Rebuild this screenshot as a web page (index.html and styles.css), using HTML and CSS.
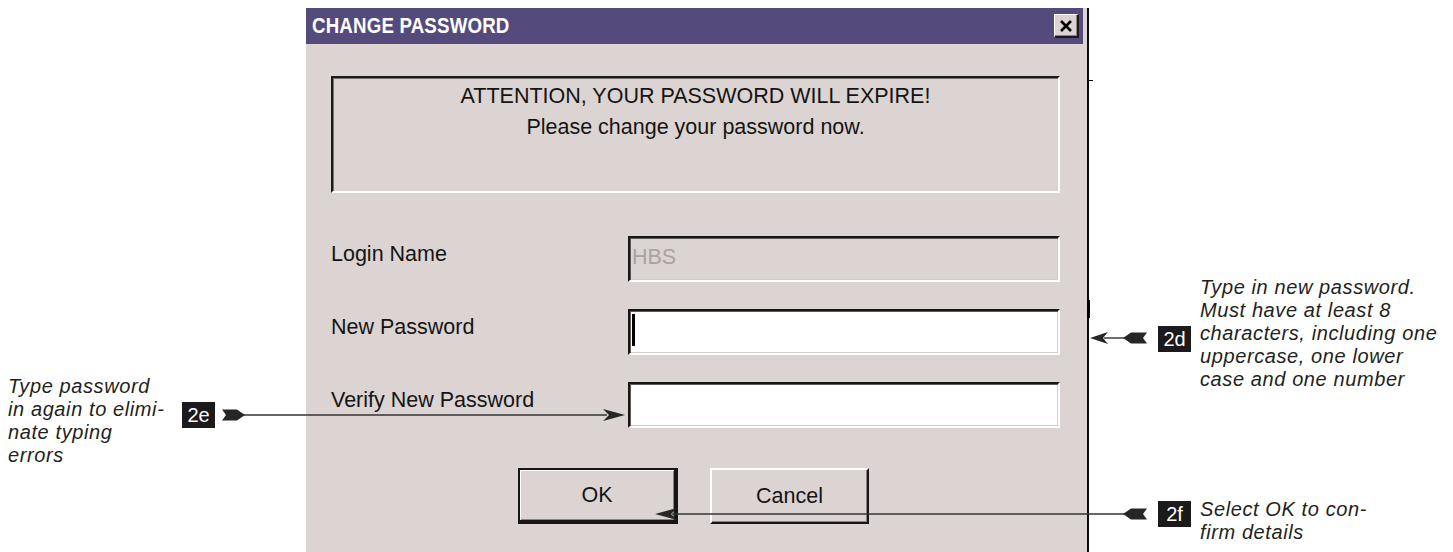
FILE: index.html
```html
<!DOCTYPE html>
<html lang="en">
<head>
<meta charset="utf-8">
<title>Change Password</title>
<link rel="stylesheet" href="styles.css">
</head>
<body>
<div class="page">
  <aside class="notes notes-left">
    <div class="note note-2e">
      <p class="note-text">Type password<br>in again to elimi-<br>nate typing<br>errors</p>
      <span class="badge">2e</span>
    </div>
  </aside>

  <section class="window">
    <header class="titlebar">
      <span class="title">CHANGE PASSWORD</span>
      <span class="close" aria-label="Close">
        <svg width="14" height="14" viewBox="0 0 14 14">
          <path d="M2 2 L12 12 M12 2 L2 12" stroke="#000" stroke-width="2.6" fill="none"/>
        </svg>
      </span>
    </header>

    <div class="body">
      <div class="message">
        <p>ATTENTION, YOUR PASSWORD WILL EXPIRE!</p>
        <p>Please change your password now.</p>
      </div>

      <div class="form">
        <div class="row">
          <span class="label">Login Name</span>
          <div class="field field-disabled">HBS</div>
        </div>
        <div class="row">
          <span class="label">New Password</span>
          <div class="field"><span class="caret"></span></div>
        </div>
        <div class="row">
          <span class="label">Verify New Password</span>
          <div class="field"></div>
        </div>
      </div>

      <div class="actions">
        <div class="btn btn-default">OK</div>
        <div class="btn">Cancel</div>
      </div>
    </div>
  </section>

  <aside class="notes notes-right">
    <div class="note note-2d">
      <span class="badge">2d</span>
      <p class="note-text">Type in new password.<br>Must have at least 8<br>characters, including one<br>uppercase, one lower<br>case and one number</p>
    </div>
    <div class="note note-2f">
      <span class="badge">2f</span>
      <p class="note-text">Select OK to con-<br>firm details</p>
    </div>
  </aside>

  <svg class="arrows" width="1453" height="552" viewBox="0 0 1453 552">
    <g stroke="#333" stroke-width="1.4" fill="none">
      <line x1="238" y1="415" x2="607" y2="415"/>
      <line x1="1104" y1="338" x2="1126" y2="338"/>
      <line x1="672" y1="514" x2="1126" y2="514"/>
    </g>
    <g fill="#262626" stroke="none">
      <!-- 2e: tail, then head pointing at the verify field -->
      <path d="M245 415 L237 409.5 L222 409.5 L226 415 L222 420.5 L237 420.5 Z"/>
      <path d="M625 415 L603 409 L609 415 L603 421 Z"/>
      <!-- 2d: head at the dialog edge, tail next to the badge -->
      <path d="M1090 338 L1108 332 L1103 338 L1108 344 Z"/>
      <path d="M1123 338 L1131 332.5 L1147 332.5 L1143 338 L1147 343.5 L1131 343.5 Z"/>
      <!-- 2f: tail next to the badge, head on the OK button -->
      <path d="M1123 514 L1131 508.5 L1147 508.5 L1143 514 L1147 519.5 L1131 519.5 Z"/>
      <path d="M655 514 L677 508 L671 514 L677 520 Z"/>
    </g>
  </svg>
</div>
</body>
</html>
```

FILE: styles.css
```css
html, body {
  margin: 0;
  padding: 0;
  overflow: hidden;
  background: #fff;
}

.page {
  position: relative;
  width: 1453px;
  height: 552px;
  display: grid;
  grid-template-columns: 306px 783px 1fr;
  align-items: start;
  overflow: hidden;
}

/* arrow layer drawn over the dialog and the notes */
.arrows {
  position: absolute;
  left: 0;
  top: 0;
  pointer-events: none;
}

/* ---------- callout notes ---------- */

.notes {
  font-family: "Liberation Sans", Arial, sans-serif;
  font-style: italic;
  font-size: 20px;
  letter-spacing: 0.6px;
  line-height: 23px;
  color: #231f20;
}

.note-text {
  margin: 0;
  white-space: nowrap;
}

.badge {
  display: block;
  width: 33px;
  height: 26px;
  line-height: 26px;
  text-align: center;
  background: #1c1a1a;
  color: #fff;
  font-style: normal;
  font-size: 20px;
  letter-spacing: 0;
}

.notes-left {
  padding-top: 375px;
  padding-left: 8px;
}

.note-2e {
  display: grid;
  grid-template-columns: 174px auto;
  align-items: start;
}

.note-2e .badge {
  margin-top: 27px;
}

.notes-right {
  display: flex;
  flex-direction: column;
  padding-left: 69px;
}

.note-2d,
.note-2f {
  display: flex;
  align-items: flex-start;
  gap: 9px;
}

.note-2d {
  margin-top: 276px;
}

.note-2d .badge {
  margin-top: 50px;
}

.note-2f {
  margin-top: 107px;
}

.note-2f .badge {
  margin-top: 3px;
}

/* ---------- dialog window ---------- */

.window {
  position: relative;
  margin-top: 8px;
  height: 560px;
  background: #dcd4d2;
  border-right: 2px solid #0c0c0c;
  font-family: "Liberation Sans", Arial, sans-serif;
  font-size: 21.5px;
  color: #141414;
}

/* small nicks on the frame edge */
.window::before {
  content: "";
  position: absolute;
  right: -6px;
  top: 72px;
  width: 4px;
  height: 1px;
  background: #000;
}

.window::after {
  content: "";
  position: absolute;
  right: -3px;
  top: 292px;
  width: 3px;
  height: 18px;
  background: #000;
}

.titlebar {
  height: 36px;
  margin-right: 4px;
  padding: 0 4px 0 6px;
  background: #544a7c;
  display: flex;
  align-items: center;
  justify-content: space-between;
}

.title {
  display: inline-block;
  color: #fff;
  font-weight: bold;
  font-size: 22px;
  letter-spacing: 0.2px;
  transform: scaleX(0.85);
  transform-origin: left center;
  white-space: nowrap;
}

.close {
  width: 25px;
  height: 24px;
  box-sizing: border-box;
  background: #dcd4d2;
  border-style: solid;
  border-width: 1px 2px 2px 1px;
  border-color: #fff #1a1a1a #1a1a1a #fff;
  box-shadow: inset -1px -1px 0 #8c8484;
  display: flex;
  align-items: center;
  justify-content: center;
}

.close svg {
  display: block;
}

.body {
  padding: 32px 27px 0 25px;
}

.message {
  box-sizing: border-box;
  height: 117px;
  padding-top: 3px;
  border-style: solid;
  border-width: 2px;
  border-color: #1a1a1a #fff #fff #1a1a1a;
  box-shadow: inset 1px 1px 0 #7a7272;
  text-align: center;
  line-height: 31px;
  margin-bottom: 43px;
}

.message p {
  margin: 0;
}

.form {
  display: grid;
  row-gap: 27px;
}

.row {
  display: grid;
  grid-template-columns: 297px 1fr;
  align-items: center;
}

.label {
  margin-bottom: 10px;
  white-space: nowrap;
}

.field {
  box-sizing: border-box;
  height: 46px;
  background: #fff;
  border-style: solid;
  border-width: 2px;
  border-color: #161616 #fff #fff #161616;
  box-shadow: inset 1px 1px 0 #5e5858, inset -1px -1px 0 #d4cccc;
  padding: 0 2px;
  display: flex;
  align-items: flex-start;
}

.field-disabled {
  background: #dcd4d2;
  color: #a9a2a2;
  align-items: center;
  padding-bottom: 3px;
}

.caret {
  display: block;
  width: 3px;
  height: 32px;
  margin-top: 3px;
  background: #000;
}

.actions {
  margin-top: 40px;
  display: flex;
  justify-content: center;
  gap: 32px;
  padding-right: 4px;
}

.btn {
  box-sizing: border-box;
  width: 159px;
  height: 56px;
  display: flex;
  align-items: center;
  justify-content: center;
  border-style: solid;
  border-width: 2px;
  border-color: #fff #161616 #161616 #fff;
  box-shadow: inset -1px -1px 0 #8c8484;
}

.btn-default {
  width: 160px;
  border-color: #161616;
  border-width: 2px 4px 4px 2px;
  box-shadow: inset 1px 1px 0 #fff, inset -1px -1px 0 #8c8484;
}
```
